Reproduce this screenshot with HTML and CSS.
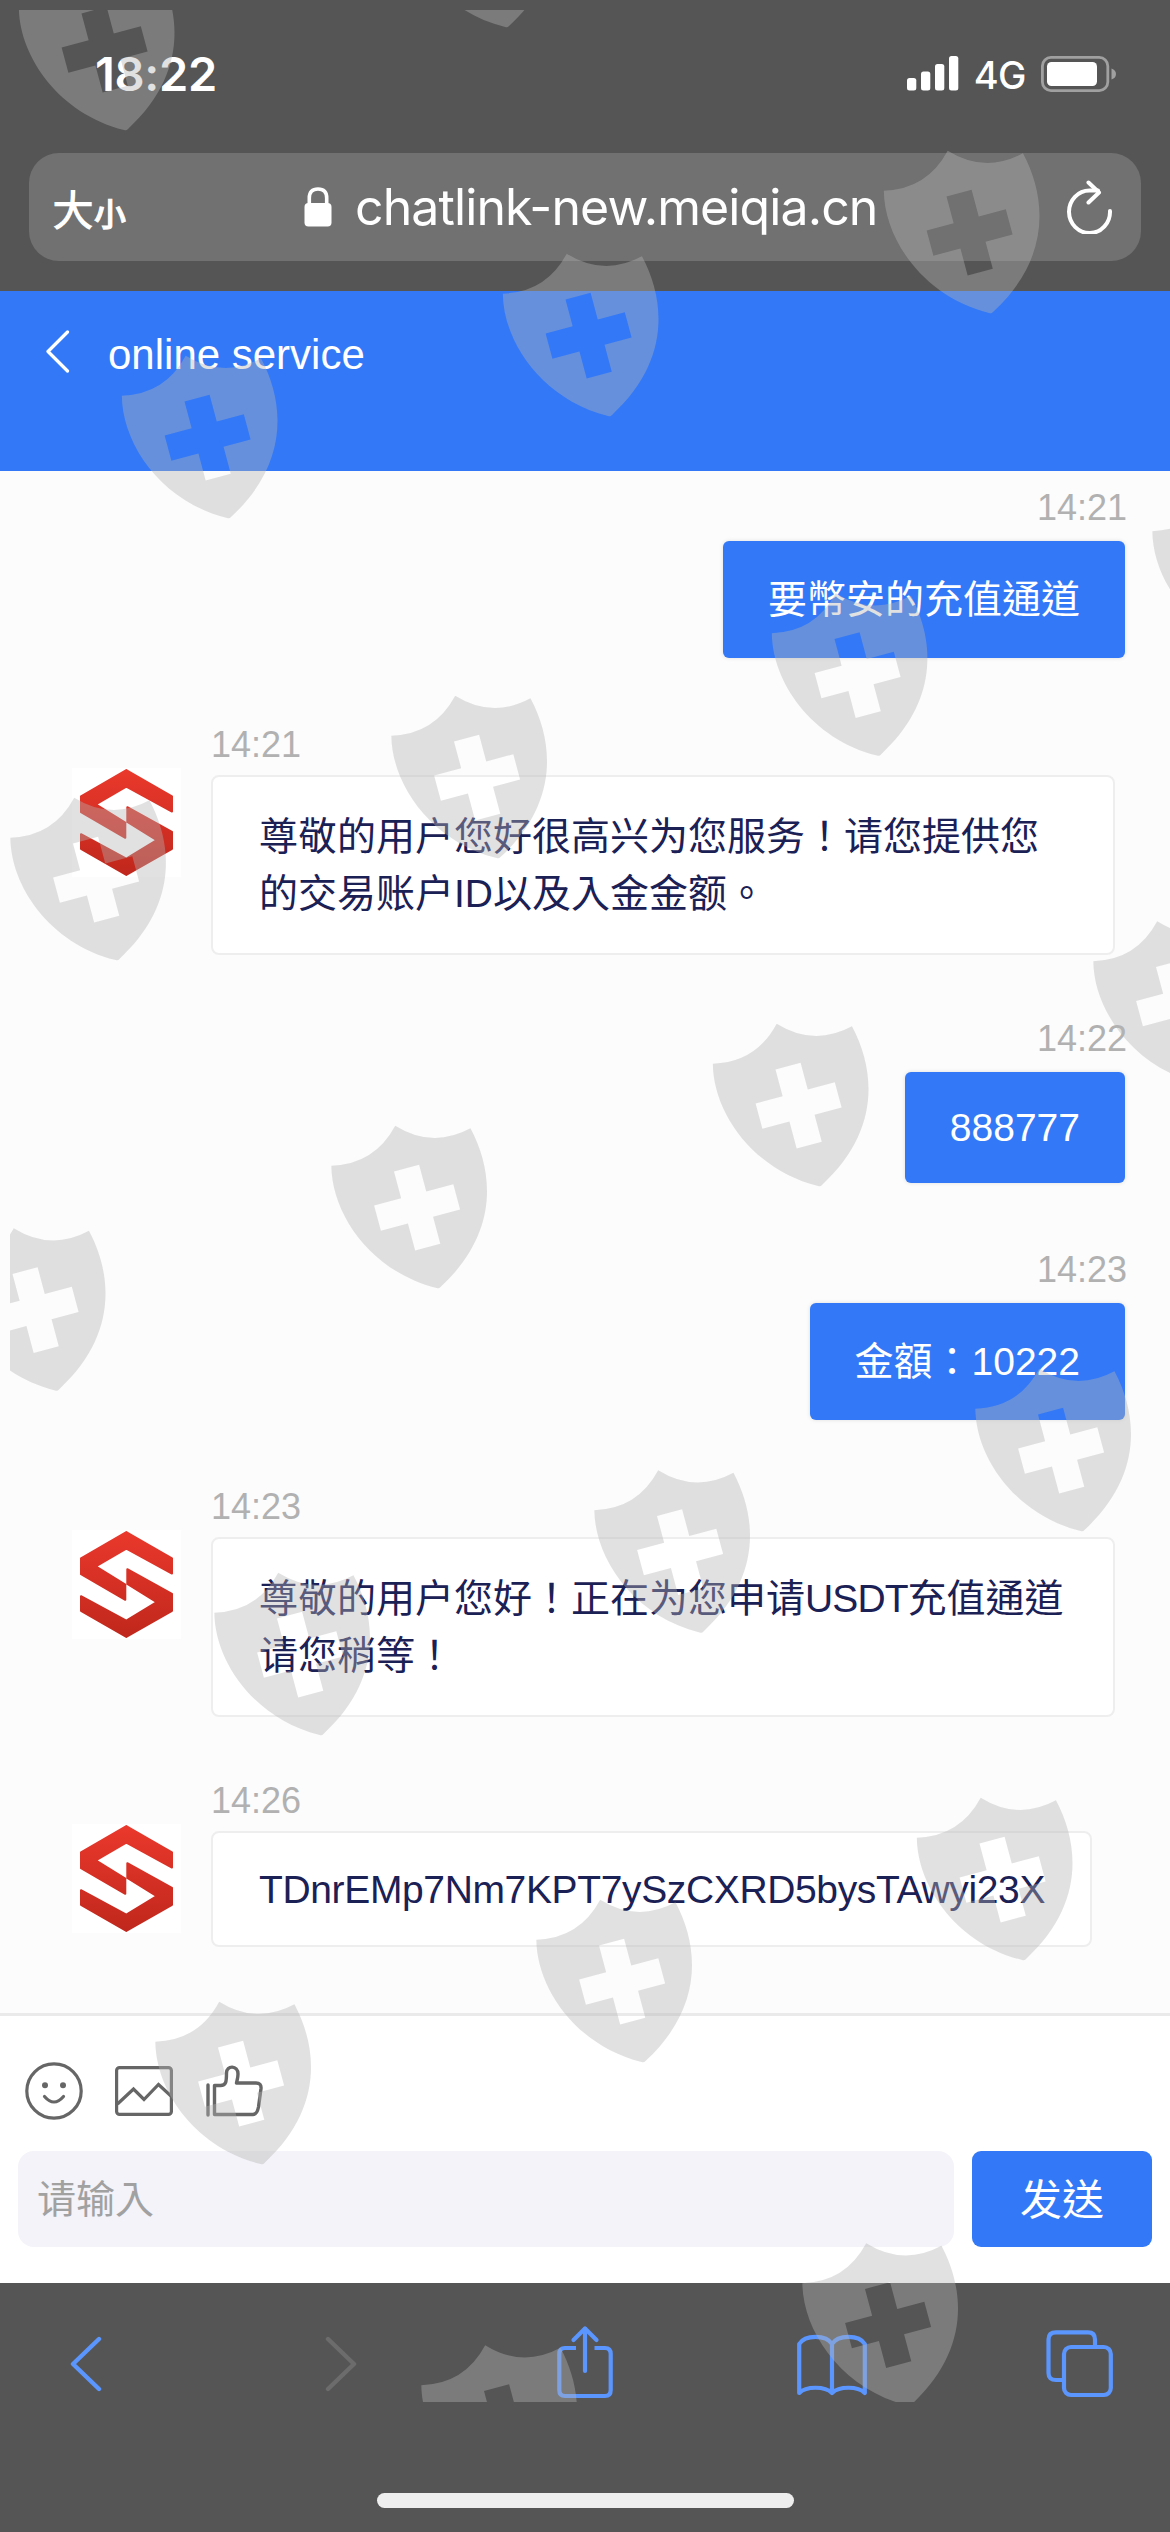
FILE: index.html
```html
<!DOCTYPE html>
<html lang="zh-Hant">
<head>
<meta charset="utf-8">
<title>online service</title>
<link rel="stylesheet" href="styles.css">
</head>
<body>
<svg class="defs" width="0" height="0" aria-hidden="true">
  <defs>
    <linearGradient id="red" x1="0" y1="0" x2="0" y2="1">
      <stop offset="0" stop-color="#ea382c"/>
      <stop offset="1" stop-color="#c0271c"/>
    </linearGradient>
    <symbol id="logo" viewBox="0 0 93 107">
      <path fill="url(#red)" stroke="url(#red)" stroke-width="2" stroke-linejoin="round" d="M46.3 1 92 27.3V42.5L46.3 17.6 15.8 35.3 45.3 53.6V68.8L1 43.2V27.3ZM47.3 38.2 92 62.9V79.8L46.3 106 1 79.8V65.2L46.3 89.700 76.7 71.2 47.3 53Z"/>
    </symbol>
  </defs>
</svg>

<div class="phone">
  <header class="browser-top">
    <div class="status">
      <span class="clock">18:22</span>
      <div class="status-right">
        <svg width="52" height="35" viewBox="0 0 52 35" fill="#fff"><rect y="22" width="9.3" height="12.5" rx="2.5"/><rect x="14" y="15.5" width="9.3" height="19" rx="2.5"/><rect x="28" y="8" width="9.3" height="26.5" rx="2.5"/><rect x="42" y="0" width="9.3" height="34.5" rx="2.5"/></svg>
        <span class="net">4G</span>
        <svg width="76" height="36" viewBox="0 0 76 36"><rect x="1.4" y="1.4" width="65.4" height="33.2" rx="8.5" fill="none" stroke="#a0a0a0" stroke-width="2.8"/><rect x="6" y="6" width="50" height="24" rx="4.5" fill="#fff"/><path d="M70.500 12.500Q75 14 75 18T70.500 23.500Z" fill="#a0a0a0"/></svg>
      </div>
    </div>
    <div class="address">
      <span class="textsize"><span class="big">大</span><span class="small">小</span></span>
      <div class="site">
        <svg width="28" height="40" viewBox="0 0 28 40"><rect x=".5" y="16" width="27" height="23.500" rx="4" fill="#fff"/><path d="M5.300 18V11Q5.300 2 14 2T22.700 11V18" fill="none" stroke="#fff" stroke-width="3.600"/></svg>
        <span class="url">chatlink-new.meiqia.cn</span>
      </div>
      <svg class="reload" width="46" height="54" viewBox="0 0 46 54" fill="none" stroke="#fff" stroke-width="4" stroke-linecap="round" stroke-linejoin="round"><path d="M43 31A20.500 21.300 0 1 1 22.500 10.500H31"/><path d="M21.500 2.500 32 12.500 21.500 22.500"/></svg>
    </div>
  </header>

  <div class="titlebar">
    <svg width="24" height="44" viewBox="0 0 24 44" fill="none" stroke="#fff" stroke-width="3.200" stroke-linecap="round" stroke-linejoin="round"><path d="M21.500 2 2 21.500 21.500 41"/></svg>
    <h1>online service</h1>
  </div>

  <main class="chat">
    <div class="msg sent"><time>14:21</time><p class="bubble">要幣安的充值通道</p></div>
    <div class="msg received">
      <div class="avatar"><svg width="93" height="107"><use href="#logo"/></svg></div>
      <div class="body"><time>14:21</time><p class="bubble wide">尊敬的用户您好很高兴为您服务！请您提供您<br>的交易账户ID以及入金金额。</p></div>
    </div>
    <div class="msg sent"><time>14:22</time><p class="bubble latin">888777</p></div>
    <div class="msg sent"><time>14:23</time><p class="bubble">金額：10222</p></div>
    <div class="msg received">
      <div class="avatar"><svg width="93" height="107"><use href="#logo"/></svg></div>
      <div class="body"><time>14:23</time><p class="bubble wide">尊敬的用户您好！正在为您申请<span class="tight">USDT</span>充值通道<br>请您稍等！</p></div>
    </div>
    <div class="msg received">
      <div class="avatar"><svg width="93" height="107"><use href="#logo"/></svg></div>
      <div class="body"><time>14:26</time><p class="bubble code">TDnrEMp7Nm7KPT7ySzCXRD5bysTAwyi23X</p></div>
    </div>
  </main>

  <section class="composer">
    <div class="tools">
      <svg width="58" height="58" viewBox="0 0 58 58" fill="none" stroke="#666" stroke-width="3.200" stroke-linecap="round"><circle cx="29" cy="29" r="27.200"/><path d="M19.500 34.500Q29 45.500 38.500 34.500"/><circle cx="20" cy="23.300" r="3" fill="#666" stroke="none"/><circle cx="38" cy="23.300" r="3" fill="#666" stroke="none"/></svg>
      <svg width="58" height="50" viewBox="0 0 58 50" fill="none" stroke="#666" stroke-width="3.200"><rect x="1.600" y="1.600" width="54.800" height="46.800" rx="3"/><path d="M2.500 38 18.500 23 29 33.500 43.500 18.500 56 30"/></svg>
      <svg width="58" height="52" viewBox="0 0 58 52" fill="none" stroke="#666" stroke-width="3.400" stroke-linejoin="round"><path d="M3 20V50" stroke-linecap="round"/><path d="M9.500 49.500V20.500H15.500C21 20.500 21.500 17 21.500 8C21.500 0 33 0 33 9C33 13 32 15 31.500 18H51Q56.500 18 56 23.500L53.500 42Q52 49.500 48 49.500Z"/></svg>
    </div>
    <div class="entry">
      <div class="field">请输入</div>
      <button class="send">发送</button>
    </div>
  </section>

  <footer class="browser-bottom">
    <nav>
      <svg class="back" width="32" height="56" viewBox="0 0 32 56" fill="none" stroke="#5b96ff" stroke-width="4.400" stroke-linecap="round" stroke-linejoin="round"><path d="M29 3 3 28 29 53"/></svg>
      <svg class="forward" width="32" height="56" viewBox="0 0 32 56" fill="none" stroke="#6c6c6c" stroke-width="4.400" stroke-linecap="round" stroke-linejoin="round"><path d="M3 3 29 28 3 53"/></svg>
      <svg class="share" width="56" height="74" viewBox="0 0 56 74" fill="none" stroke="#5b96ff" stroke-width="4.200" stroke-linejoin="round"><path d="M19 23H8Q2.300 23 2.300 29V65Q2.300 71 8 71H48Q53.700 71 53.700 65V29Q53.700 23 48 23H37.500"/><path d="M28 46V4" stroke-linecap="round"/><path d="M16.500 15 28 3.500 39.500 15" stroke-linecap="round"/></svg>
      <svg class="book" width="70" height="62" viewBox="0 0 70 62" fill="none" stroke="#5b96ff" stroke-width="4.200" stroke-linejoin="round"><path d="M35 10C29 .500 8 .500 2.200 10V59C9 52 28 52 35 59C42 52 61 52 67.800 59V10C62 .500 41 .500 35 10ZV59"/></svg>
      <svg class="tabs" width="68" height="68" viewBox="0 0 68 68" fill="none" stroke="#5b96ff" stroke-width="4.200"><rect x="18" y="17" width="46.800" height="48" rx="7"/><path d="M18 50H10Q2.500 50 2.500 43V9.500Q2.500 2.300 10 2.300H42Q49 2.300 49 9.500V17"/></svg>
    </nav>
    <div class="home"></div>
  </footer>

  <svg class="watermark" width="1160" height="2392" viewBox="10 10 1160 2392" fill="#b3b3b3" fill-opacity=".4">
    <defs><g id="mark" transform="translate(69.400 21) rotate(-15)"><path fill-rule="evenodd" d="M0-22Q30 10 72 0C84 52 70 110 2 145.500Q0 147-2 145.500C-62 112-84 46-72 0Q-30 10 0-22ZM-13 21.800V49.500H-41V75.700H-13V103.600H13V75.700H41V49.500H13V21.800Z"/></g></defs>
    <use href="#mark" x="19" y="-32"/>
    <use href="#mark" x="400" y="-135"/>
    <use href="#mark" x="122" y="356"/>
    <use href="#mark" x="503" y="254"/>
    <use href="#mark" x="884" y="151"/>
    <use href="#mark" x="1152.500" y="491.500"/>
    <use href="#mark" x="772" y="593.500"/>
    <use href="#mark" x="391.500" y="696"/>
    <use href="#mark" x="10.500" y="798"/>
    <use href="#mark" x="1093.500" y="921.500"/>
    <use href="#mark" x="713" y="1024"/>
    <use href="#mark" x="331.500" y="1126"/>
    <use href="#mark" x="-50" y="1228.500"/>
    <use href="#mark" x="975.500" y="1369"/>
    <use href="#mark" x="594.500" y="1470.500"/>
    <use href="#mark" x="214.500" y="1573"/>
    <use href="#mark" x="917" y="1798"/>
    <use href="#mark" x="536.500" y="1900"/>
    <use href="#mark" x="155.500" y="2002"/>
    <use href="#mark" x="802.500" y="2243.500"/>
    <use href="#mark" x="421.500" y="2345.500"/>
  </svg>
</div>
</body>
</html>
```
FILE: styles.css
```css
* { box-sizing: border-box; margin: 0; padding: 0; }
body { width: 1170px; font-family: "Liberation Sans", "Noto Sans CJK TC", sans-serif; }
svg { display: block; flex: none; }
.defs { position: absolute; }
.phone { position: relative; width: 1170px; height: 2532px; display: flex; flex-direction: column; overflow: hidden; background: #fcfcfc; }

.browser-top { height: 291px; background: #555; color: #fff; padding: 0 29px; }
.status { height: 153px; padding: 47px 24px 53px 66px; display: flex; align-items: center; justify-content: space-between; }
.clock { font: 600 47px/53px Inter, sans-serif; letter-spacing: -.3px; }
.status-right { display: flex; align-items: center; }
.net { font: 500 38px/53px Inter, sans-serif; margin: 0 15px; padding-top: 3px; letter-spacing: -.5px; }
.address { height: 108px; border-radius: 30px; background: #717171; display: flex; align-items: center; justify-content: space-between; padding: 0 28px 0 23px; }
.textsize { width: 252px; display: flex; align-items: baseline; font-family: "Noto Sans CJK SC", sans-serif; font-weight: 500; }
.big { font-size: 42px; }
.small { font-size: 32px; -webkit-text-stroke: 1px #fff; }
.site { flex: 1; display: flex; align-items: center; gap: 23px; }
.url { font: 400 50px/60px Inter, sans-serif; letter-spacing: -.9px; white-space: nowrap; }

.titlebar { height: 180px; background: #3379f7; color: #fff; display: flex; align-items: flex-start; gap: 38px; padding: 39px 46px; }
.titlebar h1 { font-size: 42px; font-weight: 400; line-height: 50px; }

.chat { height: 1542px; padding-top: 16px; background: #fcfcfc; }
.msg { display: flex; }
.sent { flex-direction: column; align-items: flex-end; margin-bottom: 66px; padding-right: 45px; }
.received { margin-bottom: 63px; padding-left: 72px; gap: 30px; }
time { display: block; font-size: 36px; line-height: 42px; color: #b1b1b1; }
.sent time { margin: 0 -2px 12px 0; }
.received time { margin: 0 0 9px; }
.avatar { width: 109px; height: 109px; margin-top: 44px; background: #fff; display: flex; align-items: center; justify-content: center; }
.bubble { font-size: 39px; line-height: 57px; border-radius: 6px; padding: 30px 45px; white-space: nowrap; }
.sent .bubble { background: #3379f7; color: #fff; box-shadow: 0 0 4px rgba(0, 0, 0, .12); }
.sent .latin { line-height: 51px; }
.received .bubble { background: #fff; color: #1b2055; border: 2px solid #eee; padding: 31px 46px; border-radius: 8px; }
.received .wide { width: 904px; }
.received .code { width: 881px; height: 116px; line-height: 52px; letter-spacing: -.36px; }
.tight { letter-spacing: -.9px; }

.composer { height: 270px; border-top: 3px solid #eaeaea; background: #fff; padding: 46px 18px 0; }
.tools { display: flex; align-items: center; gap: 32px; height: 58px; padding-left: 7px; }
.entry { display: flex; gap: 18px; margin-top: 31px; }
.field { flex: 1; height: 96px; border-radius: 16px; background: #f3f3f9; color: #a1a1a1; font-size: 39px; line-height: 98px; padding-left: 19px; }
.send { width: 180px; height: 96px; border: 0; border-radius: 9px; background: #3379f7; color: #fff; font: 42px/96px "Liberation Sans", "Noto Sans CJK TC", sans-serif; padding-top: 2px; }

.browser-bottom { height: 249px; background: #555; padding-top: 44px; display: flex; flex-direction: column; align-items: center; }
nav { width: 100%; height: 74px; display: flex; align-items: center; padding-left: 70px; }
.forward { margin-left: 223px; }
.share { margin: -4px 0 0 200px; }
.book { margin: 2px 0 0 184px; }
.tabs { margin-left: 179px; }
.home { width: 417px; height: 15px; border-radius: 8px; background: #eee; margin-top: 92px; }

.watermark { position: absolute; left: 10px; top: 10px; pointer-events: none; }
```
